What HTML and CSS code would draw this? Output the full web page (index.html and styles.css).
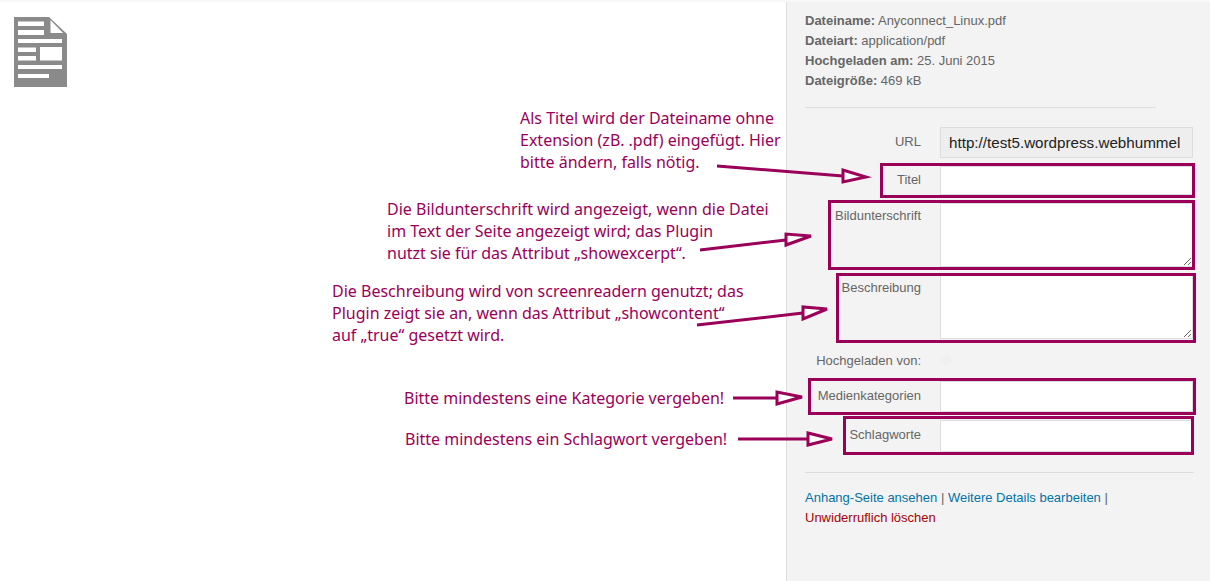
FILE: index.html
```html
<!DOCTYPE html>
<html lang="de">
<head>
    <meta charset="UTF-8">
    <title>Anhang-Details</title>
    <link rel="stylesheet" href="styles.css">
</head>
<body>
<div class="page">
    <div class="preview">
        <svg class="file-icon" width="53" height="70" viewBox="0 0 53 70">
            <path fill="#8a8a8a" d="M0 0H35L53 17V70H0Z"/>
            <path fill="#fff" d="M36.500 3L49 16H36.500Z"/>
            <path fill="#fff" d="M4 4.500H30V9H4ZM4 13H30V18H4ZM4 22H48V26H4ZM4 30.500H22V35H4ZM26 30H48V43.500H26ZM4 39H22V43.500H4ZM4 48H48V52H4ZM4 57H35V61H4Z"/>
        </svg>
    </div>
    <div class="sidebar">
        <div class="info">
            <div><b>Dateiname:</b> Anyconnect_Linux.pdf</div>
            <div><b>Dateiart:</b> application/pdf</div>
            <div><b>Hochgeladen am:</b> 25. Juni 2015</div>
            <div><b>Dateigröße:</b> 469 kB</div>
        </div>
        <div class="form">
            <label class="lbl">URL</label>
            <input class="field url" type="text" readonly value="http://test5.wordpress.webhummel">
            <label class="lbl">Titel</label>
            <input class="field short" type="text">
            <label class="lbl top">Bildunterschrift</label>
            <textarea class="field area"></textarea>
            <label class="lbl top">Beschreibung</label>
            <textarea class="field area"></textarea>
            <label class="lbl uploaded">Hochgeladen von:</label>
            <div class="uploaded-by"><span class="avatar"></span></div>
            <label class="lbl">Medienkategorien</label>
            <input class="field" type="text">
            <label class="lbl">Schlagworte</label>
            <input class="field tags" type="text">
        </div>
        <div class="actions">
            <a href="#">Anhang-Seite ansehen</a> | <a href="#">Weitere Details bearbeiten</a> |<br>
            <a href="#" class="delete">Unwiderruflich löschen</a>
        </div>
    </div>
</div>

<!-- annotations on top of the screenshot -->
<p class="note note1">Als Titel wird der Dateiname ohne<br>Extension (zB. .pdf) eingefügt. Hier<br>bitte ändern, falls nötig.</p>
<p class="note note2">Die Bildunterschrift wird angezeigt, wenn die Datei<br>im Text der Seite angezeigt wird; das Plugin<br>nutzt sie für das Attribut „showexcerpt“.</p>
<p class="note note3">Die Beschreibung wird von screenreadern genutzt; das<br>Plugin zeigt sie an, wenn das Attribut „showcontent“<br>auf „true“ gesetzt wird.</p>
<p class="note note4">Bitte mindestens eine Kategorie vergeben!</p>
<p class="note note5">Bitte mindestens ein Schlagwort vergeben!</p>

<div class="mark mark1"></div>
<div class="mark mark2"></div>
<div class="mark mark3"></div>
<div class="mark mark4"></div>
<div class="mark mark5"></div>

<svg class="arrows" width="1210" height="581" viewBox="0 0 1210 581">
    <path d="M717 166L843 176"/>
    <path class="head" d="M843 170V182L866 177Z"/>
    <path d="M700 250L786 240"/>
    <path class="head" d="M786 234V245L811 236Z"/>
    <path d="M697 325L803 313"/>
    <path class="head" d="M803 307V319L827 309Z"/>
    <path d="M733 398L777 398"/>
    <path class="head" d="M777 392V404L802 397Z"/>
    <path d="M738 439L808 439"/>
    <path class="head" d="M808 433V445L832 439Z"/>
</svg>
</body>
</html>
```

FILE: styles.css
```css
*{
    margin: 0;
    padding: 0;
    box-sizing: border-box;
}
html,body{
    height: 581px;
    overflow: hidden;
    background: #fff;
}
body{
    position: relative;
    font-family: "Liberation Sans", Arial, sans-serif;
    font-size: 13px;
    color: #666;
}
.page{
    display: flex;
    height: 581px;
    border-top: 2px solid #f8f8f8;
}
.preview{
    width: 786px;
    padding: 15px 0 0 14px;
}
.file-icon{
    display: block;
}
.sidebar{
    flex: 1;
    background: #f3f3f3;
    border-left: 1px solid #ddd;
    padding: 9px 16px 0 18px;
}
.info{
    width: 351px;
    line-height: 20px;
    padding-bottom: 16px;
    border-bottom: 1px solid #ddd;
}
.info b{
    color: #666;
}
.form{
    display: grid;
    grid-template-columns: 116px 1fr;
    column-gap: 19px;
    row-gap: 8px;
    margin-top: 19px;
}
.lbl{
    justify-self: end;
    align-self: center;
    padding-bottom: 3px;
}
.lbl.top{
    align-self: start;
    padding: 5px 0 0;
}
.lbl.uploaded{
    white-space: nowrap;
    padding-bottom: 0;
}
.field{
    display: block;
    width: 253px;
    height: 31px;
    border: 1px solid #ddd;
    border-radius: 0;
    background: #fff;
    font-family: "Liberation Sans", Arial, sans-serif;
    font-size: 15.200px;
    color: #222;
    padding: 0 8px;
    outline: none;
}
.url{
    background: #eee;
}
.short{
    height: 29px;
}
.tags{
    height: 32px;
}
.area{
    height: 64px;
    resize: vertical;
}
.uploaded-by{
    height: 26px;
    display: flex;
    align-items: center;
}
.avatar{
    width: 12px;
    height: 12px;
    border-radius: 50%;
    background: #f0f0f0;
}
.actions{
    margin-top: 20px;
    padding-top: 15px;
    border-top: 1px solid #ddd;
    line-height: 20px;
}
.actions a{
    color: #0073aa;
    text-decoration: none;
}
.actions a.delete{
    color: #a00;
}

/* annotations */
.note{
    position: absolute;
    font-family: "Noto Sans", sans-serif;
    font-size: 16px;
    line-height: 22px;
    color: #9b0059;
    white-space: nowrap;
}
.note1{ left: 520px; top: 107px; }
.note2{ left: 387px; top: 198px; }
.note3{ left: 332px; top: 280px; }
.note4{ left: 404px; top: 387px; }
.note5{ left: 405px; top: 428px; }
.mark{
    position: absolute;
    border: 3px solid #9b0059;
}
.mark1{ left: 880px; top: 163px; width: 315px; height: 35px; }
.mark2{ left: 828px; top: 200px; width: 367px; height: 70px; }
.mark3{ left: 836px; top: 273px; width: 360px; height: 70px; }
.mark4{ left: 808px; top: 378px; width: 388px; height: 37px; }
.mark5{ left: 843px; top: 416px; width: 351px; height: 39px; }
.arrows{
    position: absolute;
    left: 0;
    top: 0;
    pointer-events: none;
}
.arrows path{
    fill: none;
    stroke: #9b0059;
    stroke-width: 3;
}
.arrows .head{
    fill: #fff;
}
```
